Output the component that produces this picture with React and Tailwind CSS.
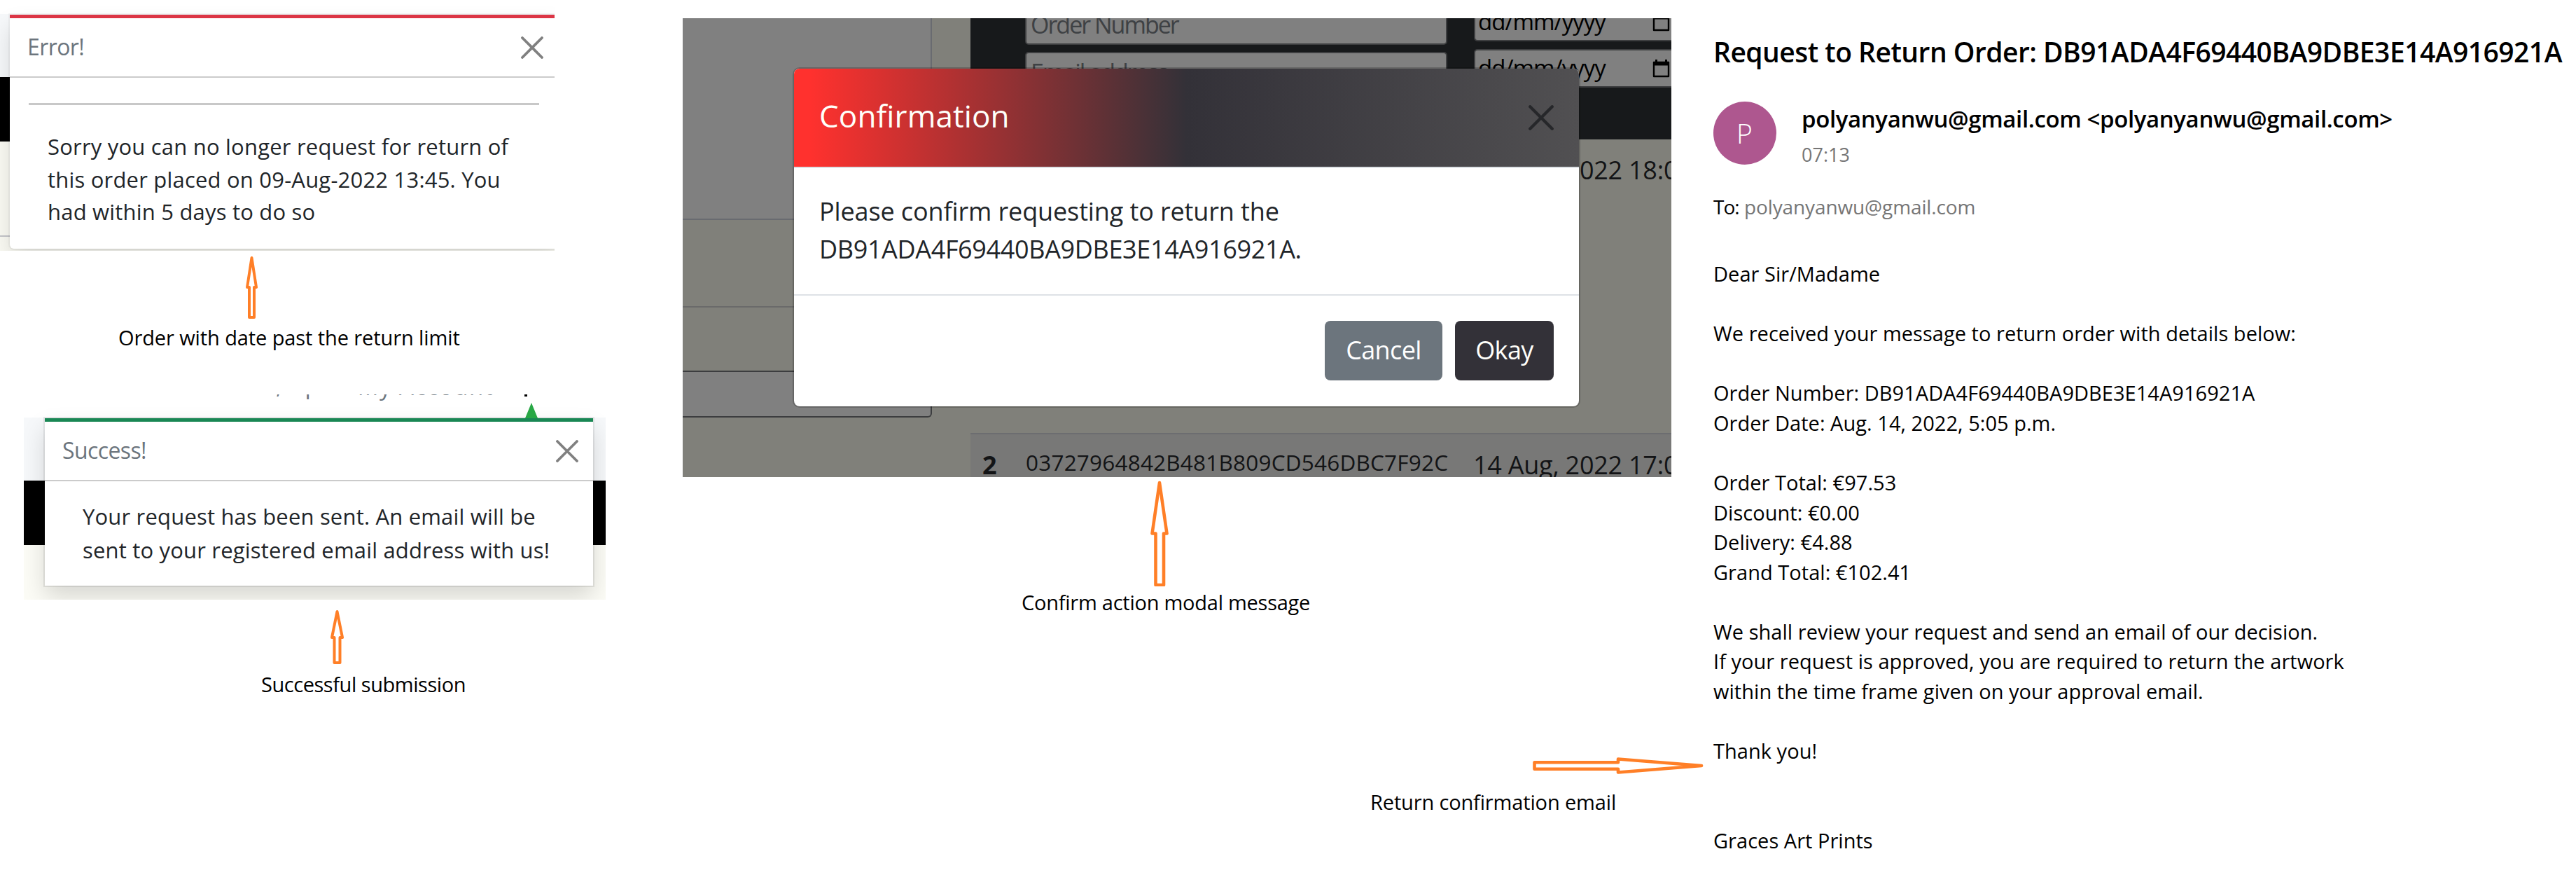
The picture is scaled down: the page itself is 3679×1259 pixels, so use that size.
import React from "react";

function Arrow({ width, height, points, stroke = 4, className = "" }) {
  return (
    <svg width={width} height={height} viewBox={`0 0 ${width} ${height}`} className={`shrink-0 ${className}`}>
      <polygon points={points} fill="none" stroke="#ff7f27" strokeWidth={stroke} strokeLinejoin="round" />
    </svg>
  );
}

function Cross({ size, className = "" }) {
  return (
    <svg width={size} height={size} viewBox="0 0 32 32" className={className}>
      <path d="M2 2 L30 30 M30 2 L2 30" fill="none" stroke="currentColor" strokeWidth="3.8" strokeLinecap="round" />
    </svg>
  );
}

function Caption({ children, className = "" }) {
  return <p className={`whitespace-nowrap text-[29px] leading-[40px] text-black ${className}`}>{children}</p>;
}

function ToastHeader({ title }) {
  return (
    <div className="flex h-[85px] items-center justify-between border-b-2 border-[#cbcbcb] pl-[25px] pr-[21px]">
      <h2 className="-mt-[2px] text-[32px] font-medium leading-[40px] tracking-[-0.6px] text-[#6c757d]">{title}</h2>
      <Cross size={32} className="text-[#808080]" />
    </div>
  );
}

function ErrorToast() {
  return (
    <section className="relative h-[358px] w-[792px] overflow-hidden">
      <div className="absolute inset-0 flex flex-col">
        <div className="h-[20px]" />
        <div className="h-[90px] bg-[#f6f8fa]" />
        <div className="h-[92px] bg-black" />
        <div className="h-[134px] bg-[#fafaf3]" />
        <div className="h-[2px] bg-[#c4c5c9]" />
        <div className="grow bg-[#fafaf3]" />
      </div>
      <div className="relative ml-[14px] mt-[21px] h-[334px] w-[786px] rounded-b-[6px] border-t-[5px] border-[#dc3545] bg-white shadow-[0_0_0_2px_rgba(0,0,0,0.04),0_16px_32px_rgba(0,0,0,0.13)]">
        <div className="w-[783px]">
          <ToastHeader title="Error!" />
        </div>
        <hr className="ml-[27px] mt-[36px] h-[3px] w-[729px] border-0 bg-[#c8c8c8]" />
        <p className="ml-[54px] mt-[36px] whitespace-nowrap text-[31px] leading-[46.7px] tracking-[0.2px] text-[#212529]">
          Sorry you can no longer request for return of
          <br />
          this order placed on 09-Aug-2022 13:45. You
          <br />
          had within 5 days to do so
        </p>
      </div>
    </section>
  );
}

function SuccessToast() {
  return (
    <section className="relative ml-[34px] mt-[61px] h-[293px] w-[831px] overflow-hidden">
      <div className="absolute inset-0 flex flex-col">
        <div className="flex h-[33px] overflow-hidden text-[33px] leading-[40px] text-[#6c757d]">
          <span className="ml-[360px] mt-[-33px]">,</span>
          <span className="ml-[33px] mt-[-33px]">p</span>
          <span className="ml-[55px] mt-[-31px] whitespace-nowrap tracking-[1.5px]">My Account</span>
          <span className="ml-[44px] h-[3px] w-[4px] bg-black" />
        </div>
        <div className="h-[90px] bg-[#f6f8fa]" />
        <div className="h-[92px] bg-black" />
        <div className="grow bg-[#fcfcf6]" />
      </div>
      <div className="relative ml-[30px] mt-[34px] h-[239px] w-[783px] border-t-[5px] border-[#198754] bg-white shadow-[0_0_0_2px_rgba(0,0,0,0.08),0_16px_32px_rgba(0,0,0,0.15)]">
        <svg width="18" height="22" viewBox="0 0 18 22" className="absolute left-[686px] top-[-27px]">
          <path d="M9 0 L18 22 H0 Z" fill="#28a745" />
        </svg>
        <ToastHeader title="Success!" />
        <p className="ml-[54px] mt-[26px] whitespace-nowrap text-[31px] leading-[48px] tracking-[0.18px] text-[#212529]">
          Your request has been sent. An email will be
          <br />
          sent to your registered email address with us!
        </p>
      </div>
    </section>
  );
}

function CalendarIcon({ className = "" }) {
  return (
    <svg width="25" height="27" viewBox="0 0 25 27" className={className}>
      <path d="M2 5 H23 V25 H2 Z" fill="none" stroke="#000" strokeWidth="2.4" strokeLinejoin="round" />
      <path d="M1 4 H24 V9.5 H1 Z M4 1 H7 V5 H4 Z M18 1 H21 V5 H18 Z" fill="#000" />
    </svg>
  );
}

function TextField({ label }) {
  return (
    <div className="flex h-[58px] w-[603px] items-center rounded-[5px] border-2 border-[#3d3e40] bg-[#808080] pl-[6px]">
      <span className="-mt-px text-[34px] font-medium leading-[40px] tracking-[-2px] text-[#3e4144]">{label}</span>
    </div>
  );
}

function DateField() {
  return (
    <div className="flex h-[55px] w-[320px] shrink-0 items-center rounded-[5px] border-2 border-[#3d3e40] bg-[#808080] pl-[4px]">
      <span className="-mt-px w-[249px] text-[33px] font-medium leading-[40px] tracking-[-1px] text-black">dd/mm/yyyy</span>
      <CalendarIcon className="-mt-px" />
    </div>
  );
}

function PageBehind() {
  return (
    <div className="flex h-full">
      <div className="flex w-[356px] shrink-0 flex-col">
        <div className="h-[288px] border-b-2 border-r-2 border-[#696b70] bg-[#808080]" />
        <div className="mt-[123px] h-[2px] bg-[#6a6a6a]" />
        <div className="mt-[90px] h-[67px] rounded-br-[6px] border-b-2 border-r-2 border-t-2 border-[#3c3d3f] bg-[#808080]" />
      </div>
      <div className="ml-[55px] flex w-[1001px] shrink-0 flex-col overflow-hidden text-[#131416]">
        <div className="flex h-[173px] shrink-0 overflow-hidden bg-[#17191b] pl-[78px]">
          <div className="mt-[-20px] flex flex-col gap-[10px]">
            <TextField label="Order Number" />
            <TextField label="Email address" />
          </div>
          <div className="ml-[38px] mt-[-22px] flex flex-col gap-[11px]">
            <DateField />
            <DateField />
          </div>
        </div>
        <div className="h-[419px] shrink-0 pl-[718px] pt-[24px]">
          <span className="whitespace-nowrap text-[36px] leading-[40px] tracking-[-0.25px]">14 Aug, 2022 18:00</span>
        </div>
        <div className="flex grow whitespace-nowrap border-t-2 border-[#6c6d70] bg-[#787877] leading-[40px]">
          <span className="ml-[17px] mt-[24px] w-[62px] shrink-0 text-[36px] font-bold">2</span>
          <span className="mt-[20px] w-[639px] shrink-0 text-[31.5px] tracking-[0.2px]">03727964842B481B809CD546DBC7F92C</span>
          <span className="mt-[24px] shrink-0 text-[36px] tracking-[-0.25px]">14 Aug, 2022 17:05</span>
        </div>
      </div>
    </div>
  );
}

function ConfirmModal() {
  return (
    <div className="absolute left-[159px] top-[72px] flex h-[482px] w-[1121px] flex-col overflow-hidden rounded-[8px] bg-white shadow-[0_0_0_2px_rgba(0,0,0,0.2)]">
      <div className="flex h-[142px] shrink-0 items-center justify-between border-b-2 border-[#dee2e6] bg-[linear-gradient(90deg,#ff312e_2%,#333138_50%,#515052)] pl-[36px] pr-[36px]">
        <h1 className="-mt-[6px] text-[44px] leading-[56px] tracking-[0.1px] text-[#fffffa]">Confirmation</h1>
        <Cross size={36} className="text-[#26272a]" />
      </div>
      <p className="h-[180px] whitespace-nowrap pl-[36px] pt-[35px] text-[36px] leading-[53.6px] tracking-[-0.12px] text-[#212529]">
        Please confirm requesting to return the
        <br />
        <span className="tracking-[-0.36px]">DB91ADA4F69440BA9DBE3E14A916921A.</span>
      </p>
      <div className="flex grow justify-end gap-[18px] border-t-2 border-[#dee2e6] pr-[36px] pt-[36px] text-[36px] leading-[54px] tracking-[-0.6px]">
        <button className="h-[85px] w-[168px] rounded-[8px] bg-[#6c757d] pb-0.5 text-white">Cancel</button>
        <button className="h-[85px] w-[141px] rounded-[8px] bg-[#333138] pb-0.5 text-[#fffffa]">Okay</button>
      </div>
    </div>
  );
}

const BODY = [
  "Dear Sir/Madame",
  "",
  "We received your message to return order with details below:",
  "",
  "Order Number: DB91ADA4F69440BA9DBE3E14A916921A",
  "Order Date: Aug. 14, 2022, 5:05 p.m.",
  "",
  "Order Total: €97.53",
  "Discount: €0.00",
  "Delivery: €4.88",
  "Grand Total: €102.41",
  "",
  "We shall review your request and send an email of our decision.",
  "If your request is approved, you are required to return the artwork",
  "within the time frame given on your approval email.",
  "",
  "Thank you!",
  "",
  "",
  "Graces Art Prints",
];

function Email() {
  return (
    <article className="flex flex-col whitespace-nowrap pl-[60px] pt-[48px] text-black">
      <h1 className="text-[39px] font-semibold leading-[52px] tracking-[-0.52px]">
        Request to Return Order: DB91ADA4F69440BA9DBE3E14A916921A
      </h1>
      <div className="mt-[45px] flex h-[90px] items-start">
        <div className="flex size-[90px] items-center justify-center rounded-full bg-[#ae578f] pr-px text-[39px] font-light text-white">P</div>
        <div className="ml-[36px] mt-[3px]">
          <p className="text-[33px] font-semibold leading-[44px] tracking-[-0.38px]">polyanyanwu@gmail.com &lt;polyanyanwu@gmail.com&gt;</p>
          <p className="mt-[11px] text-[27px] leading-[36px] text-[#767676]">07:13</p>
        </div>
      </div>
      <p className="mt-[40px] flex text-[28px] leading-[40px] tracking-[-0.12px] text-[#767676]">
        <span className="w-[44px] tracking-[-1px] text-black">To:</span>polyanyanwu@gmail.com
      </p>
      <div className="mt-[55px] text-[29px] leading-[42.56px] tracking-[0.03px]">
        {BODY.map((line, i) => (
          <p key={i}>{line || "\u00a0"}</p>
        ))}
      </div>
    </article>
  );
}

export default function App() {
  return (
    <main className="flex h-[1259px] w-[3679px] items-start overflow-hidden bg-white font-['Open_Sans',sans-serif]">
      <div className="flex w-[975px] shrink-0 flex-col">
        <ErrorToast />
        <Arrow width={17} height={90} points="8.5,3 15,45 12,45 12,88 5,88 5,45 2,45" className="ml-[351px] mt-[7px]" />
        <Caption className="ml-[169px] mt-[7px] tracking-[-0.1px]">Order with date past the return limit</Caption>
        <SuccessToast />
        <Arrow width={19} height={78} points="9.5,3 17,40 13.5,40 13.5,76 5.5,76 5.5,40 2,40" className="ml-[472px] mt-[14px]" />
        <Caption className="ml-[373px] mt-[9px] tracking-[-0.45px]">Successful submission</Caption>
      </div>
      <div className="flex w-[1412px] shrink-0 flex-col pt-[26px]">
        <section className="relative h-[655px] overflow-hidden bg-[#80807a]">
          <PageBehind />
          <ConfirmModal />
        </section>
        <Arrow width={26} height={151} stroke={4.6} points="13,3 23.5,75.5 19,75.5 19,149 7.5,149 7.5,75.5 2.5,75.5" className="ml-[668px] mt-[5px]" />
        <Caption className="ml-[484px] mt-[3px] tracking-[-0.25px]">Confirm action modal message</Caption>
        <Arrow width={244} height={24} stroke={4.6} points="2.5,7.3 122,7.3 122,2.5 241,12 122,21.5 122,16.7 2.5,16.7" className="ml-[1214px] mt-[201px]" />
        <Caption className="ml-[982px] mt-[20px] tracking-[-0.15px]">Return confirmation email</Caption>
      </div>
      <Email />
    </main>
  );
}
